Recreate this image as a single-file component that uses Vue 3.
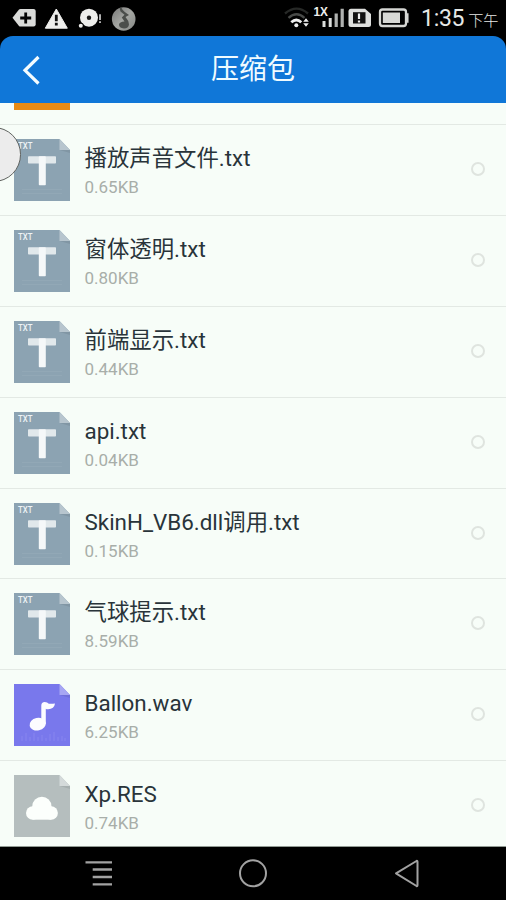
<template>
  <div class="phone">
    <div class="status-bar">
      <svg class="notices" width="150" height="36" viewBox="0 0 150 36">
        <path d="M12.500 17.700 19 9.500q.5-.6 1.500-.6h13q2.200 0 2.200 2.200v13.200q0 2.200-2.200 2.200h-13q-1 0-1.500-.6z" fill="#dadbd9" />
        <path d="M25.700 12.500v11M20.200 18h11" stroke="#050505" stroke-width="2.800" />
        <path d="M56.300 9 67.300 28.200H45.300z" fill="#eeeeec" stroke="#eeeeec" stroke-linejoin="round" />
        <path d="M56.300 14.800v6.400M56.300 22.700v2.700" stroke="#111" stroke-width="2.800" />
        <circle cx="89" cy="17.700" r="9" fill="#ededeb" />
        <circle cx="89" cy="17.700" r="2.200" fill="#191919" />
        <circle cx="80.800" cy="25.800" r="3" fill="#000" />
        <circle cx="80.800" cy="25.800" r="2" fill="#ededeb" />
        <path d="M100 14.200v5.800M100 21.300v1.800" stroke="#c4c4c4" stroke-width="1.800" />
        <defs>
          <linearGradient id="disc" x1="0" y1="0" x2="1" y2="1">
            <stop offset="0" stop-color="#777" />
            <stop offset=".5" stop-color="#a4a6a2" />
            <stop offset="1" stop-color="#858784" />
          </linearGradient>
        </defs>
        <circle cx="123.700" cy="19" r="11.800" fill="url(#disc)" />
        <path d="M119.500 8 121.500 7.600Q122 10.500 126.500 13.200L129 15 125.500 17Q128.800 20.500 129 24.500 128.500 28.500 124 28.500 118.800 28 119 24.500 119.500 21.800 124.500 21.500L121.800 17.500 124.500 14.800 120.500 11.500z" fill="#4b4e4b" />
      </svg>
      <svg class="signals" width="134" height="36" viewBox="0 0 134 36">
        <g fill="none" stroke-width="2.300">
          <path d="M1 13.500Q12.500 3.800 24 13.500" stroke="#272927" />
          <path d="M4.500 17.800Q12.500 10.700 20.500 17.800" stroke="#484a48" />
          <path d="M7.300 22.300Q12.300 17.700 17.300 22.300" stroke="#eee" stroke-width="2.800" />
        </g>
        <circle cx="12.300" cy="25.300" r="2" fill="#eee" />
        <path d="M22 18.200 24.800 21.700h-5.600zM19.200 23.300h5.600L22 26.800z" fill="#eee" />
        <text x="29.500" y="15.500" class="network" textLength="14.500" lengthAdjust="spacingAndGlyphs">1X</text>
        <path d="M40 21v6M46.200 18v9" stroke="#dcdedc" stroke-width="3" />
        <path d="M52.200 13.500v13.500M58.200 8.800V27" stroke="#b0b2b0" stroke-width="3.200" />
        <path d="M68.500 8.700h14L88.500 14v10.500q0 2.500-2.500 2.500H68.500Q66 27 66 24.500V11.200q0-2.500 2.500-2.500z" transform="translate(-1.500 0)" fill="#dedfdd" />
        <rect x="69" y="12.200" width="12.500" height="11.300" fill="#111" />
        <path d="M75 13.500v5.500M75 20.500v2" stroke="#eee" stroke-width="2.200" />
        <rect x="96" y="9.500" width="26" height="16.500" rx="2.500" fill="none" stroke="#d5d6d3" stroke-width="2.300" />
        <rect x="98.800" y="12.500" width="17.200" height="10.500" fill="#d7d8d5" />
        <path d="M122.800 14h1v8h-1z" stroke="#d5d6d3" stroke-width="1.500" />
      </svg>
      <span class="clock">1:35</span>
      <span class="period">下午</span>
    </div>

    <header class="title-bar">
      <svg class="back" width="20" height="32" viewBox="0 0 20 32">
        <path d="M17.500 3 4 16.300l13.500 13.200" fill="none" stroke="#f4fcff" stroke-width="3.200" />
      </svg>
      <h1>压缩包</h1>
    </header>

    <main class="list">
      <div class="row partial"><div class="orange"></div></div>
      <div v-for="file in files" :key="file.name" class="row">
        <svg class="file-icon" width="56" height="62" viewBox="0 0 56 62">
          <path d="M0 0h45.500L56 11v51H0z" :fill="colors[file.type].base" />
          <path d="M45.500 11H56v3z" fill="#000" opacity=".08" />
          <path d="M45.500 0 56 11H45.500z" :fill="colors[file.type].fold" />
          <template v-if="file.type === 'txt'">
            <path d="M8 50.500h40M8 54.500h40" stroke="#9db0bc" opacity=".4" />
            <rect x="14" y="17.300" width="28" height="7.200" rx=".8" fill="#e1e8eb" />
            <rect x="24.800" y="17.300" width="7" height="29" rx=".8" fill="#f5f8f9" />
            <text x="4" y="9.800" class="tag" textLength="14.500" lengthAdjust="spacingAndGlyphs">TXT</text>
          </template>
          <template v-else-if="file.type === 'audio'">
            <path d="M8 57v-5M12 57v-8M16 57v-4M20 57v-8M24 57v-4M28 57v-6M32 57v-3M36 57v-7M40 57v-9M44 57v-4M48 57v-5M51 57v-3" stroke="#8483ee" stroke-width="1.300" />
            <ellipse cx="23.700" cy="40.200" rx="8.200" ry="6.300" transform="rotate(-12 23.700 40.200)" fill="#fcfcff" />
            <path d="M27.300 40V21.500q0-3.500 3.500-3.500 2.500 0 4 1.700 2.500.3 6.200-.2-.8 5.700-6.900 5.700-1.800 0-2.300-.5V40z" fill="#fcfcff" />
          </template>
          <g v-else fill="#fcfffc">
            <circle cx="27.900" cy="31.300" r="9.600" />
            <circle cx="18.700" cy="38" r="6.700" />
            <circle cx="37.200" cy="38" r="6.700" />
            <path d="M18.700 31.500h18.500v13.200H18.700z" />
          </g>
        </svg>
        <div class="info">
          <div class="name">{{ file.name }}</div>
          <div class="size">{{ file.size }}</div>
        </div>
        <i class="radio"></i>
      </div>
    </main>

    <nav class="nav-bar">
      <svg width="506" height="53" viewBox="0 0 506 53">
        <g fill="none" stroke="#a2a2a2" stroke-width="2">
          <path d="M85.500 15.300H112M92.700 22.500H112M92.700 30H112M92.700 37.300H112" stroke-width="2.300" />
          <circle cx="253" cy="26.300" r="13" />
          <path d="M396 26.300 416.500 14Q417.500 13.500 417.500 15v23q0 1.500-1 1z" stroke-linejoin="round" />
        </g>
      </svg>
    </nav>

    <div class="float-ball"></div>
  </div>
</template>

<script setup>
const colors = {
  txt: { base: '#8ca3b2', fold: '#b7c5ce' },
  audio: { base: '#7978ec', fold: '#a7a6f3' },
  other: { base: '#b5bebe', fold: '#d4dada' },
}

const files = [
  { name: '播放声音文件.txt', size: '0.65KB', type: 'txt' },
  { name: '窗体透明.txt', size: '0.80KB', type: 'txt' },
  { name: '前端显示.txt', size: '0.44KB', type: 'txt' },
  { name: 'api.txt', size: '0.04KB', type: 'txt' },
  { name: 'SkinH_VB6.dll调用.txt', size: '0.15KB', type: 'txt' },
  { name: '气球提示.txt', size: '8.59KB', type: 'txt' },
  { name: 'Ballon.wav', size: '6.25KB', type: 'audio' },
  { name: 'Xp.RES', size: '0.74KB', type: 'other' },
]
</script>

<style>
body {
  margin: 0;
  background: #000;
}
</style>

<style scoped>
.phone {
  position: relative;
  display: flex;
  flex-direction: column;
  width: 506px;
  height: 900px;
  overflow: hidden;
  background: #000;
  font-family: Roboto, 'Noto Sans CJK SC', sans-serif;
}

.status-bar {
  display: flex;
  flex: none;
  height: 36px;
  color: #e6e8e6;
  white-space: nowrap;
}

.signals {
  margin-left: 134px;
}

.network {
  font-family: 'Liberation Sans', sans-serif;
  font-size: 12px;
  font-weight: bold;
  fill: #eee;
}

.clock {
  margin-left: 3px;
  font-size: 23px;
  line-height: 37px;
  letter-spacing: -0.3px;
}

.period {
  margin-left: 4px;
  font-family: 'Noto Sans CJK SC', sans-serif;
  font-size: 15.2px;
  font-weight: 300;
  line-height: 39px;
}

.title-bar {
  display: flex;
  flex: none;
  align-items: center;
  height: 67px;
  border-radius: 13px 13px 0 0;
  background: #1077d8;
  color: #f0fbff;
}

.back {
  width: 20px;
  margin-left: 21px;
}

.title-bar h1 {
  flex: 1;
  margin: 0 41px 0 0;
  font-size: 28px;
  font-weight: 400;
  line-height: 67px;
  text-align: center;
}

.list {
  flex: none;
  box-sizing: border-box;
  height: 744px;
  overflow: hidden;
  border-bottom: 1px solid #929b94;
  background: #f7fdf8;
}

.row {
  display: flex;
  box-sizing: border-box;
  height: 90.9px;
  padding: 14px 21px 0 14px;
  border-bottom: 1px solid #e3e9e4;
}

.partial {
  height: 22px;
  padding-top: 0;
}

.orange {
  width: 56px;
  height: 7px;
  background: #e88b15;
}

.file-icon {
  flex: none;
}

.info {
  flex: 1;
  margin-left: 14.5px;
}

.name {
  height: 38px;
  color: #29343a;
  font-size: 22.4px;
  line-height: 39px;
  white-space: nowrap;
}

.size {
  color: #a8aea9;
  font-size: 17px;
  line-height: 21px;
}

.tag {
  font-size: 8.8px;
  font-weight: 500;
  fill: #eef3f5;
}

.radio {
  box-sizing: border-box;
  width: 14px;
  height: 14px;
  margin-top: 23px;
  border: 2px solid #dfe4df;
  border-radius: 50%;
}

.nav-bar {
  height: 53px;
}

.float-ball {
  position: absolute;
  top: 127px;
  left: -34px;
  box-sizing: border-box;
  width: 54.5px;
  height: 54.5px;
  border: 1.5px solid #606360;
  border-radius: 50%;
  background: #ececec;
}
</style>
